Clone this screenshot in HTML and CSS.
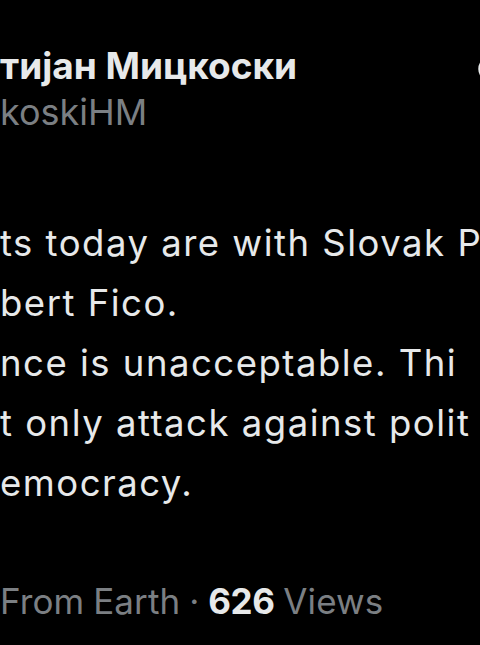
FILE: index.html
```html
<!DOCTYPE html>
<html>
<head>
<meta charset="utf-8">
<link rel="stylesheet" href="styles.css">
</head>
<body>
<div class="tweet">
  <div class="header">
    <div class="ident">
      <div class="name">тијан Мицкоски</div>
      <div class="handle">koskiHM</div>
    </div>
    <svg class="edge-icon" width="24" height="28" viewBox="0 0 24 28"><circle cx="14" cy="14" r="11.5" fill="none" stroke="#e7e9ea" stroke-width="2.5"/></svg>
  </div>
  <div class="text">
    <div class="line">ts today are with Slovak P</div>
    <div class="line">bert Fico.</div>
    <div class="line">nce is unacceptable. Thi</div>
    <div class="line">t only attack against polit</div>
    <div class="line">emocracy.</div>
  </div>
  <div class="meta">From Earth · <span class="count">626</span> Views</div>
</div>
</body>
</html>
```
FILE: styles.css
```css
html, body {
  margin: 0;
  padding: 0;
  background: #000;
  width: 480px;
  height: 645px;
  overflow: hidden;
}
.tweet {
  font-family: Inter, "Liberation Sans", sans-serif;
  color: #e7e9ea;
  font-size: 35px;
  padding-top: 42px;
}
.header {
  display: flex;
  justify-content: space-between;
  align-items: flex-start;
}
.ident {
  line-height: 47px;
}
.name {
  font-size: 37px;
  font-weight: 700;
  white-space: nowrap;
}
.handle {
  font-size: 36px;
  color: #7b7f83;
}
.edge-icon {
  margin-top: 13px;
  margin-right: -21px;
  flex: none;
}
.text {
  margin-top: 77px;
  line-height: 60px;
  font-size: 36.5px;
  letter-spacing: 1.5px;
}
.line {
  white-space: nowrap;
  overflow: hidden;
}
.meta {
  margin-top: 58px;
  line-height: 60px;
  color: #7b7f83;
  white-space: nowrap;
  letter-spacing: 0.1px;
  word-spacing: -1px;
}
.count {
  color: #e7e9ea;
  font-weight: 700;
  letter-spacing: -0.5px;
}
```
